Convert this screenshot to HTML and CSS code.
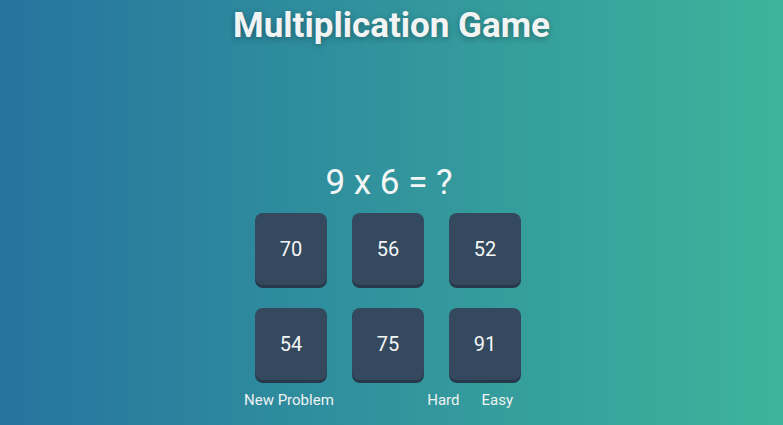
FILE: index.html
```html
<!DOCTYPE html>
<html>
<head>
<meta charset="utf-8">
<link rel="stylesheet" href="styles.css">
</head>
<body>
<div class="page">
  <h1 class="title">Multiplication Game</h1>
  <div class="game">
    <div class="problem">9 x 6 = ?</div>
    <div class="grid">
      <button class="answer">70</button>
      <button class="answer">56</button>
      <button class="answer">52</button>
      <button class="answer">54</button>
      <button class="answer">75</button>
      <button class="answer">91</button>
    </div>
    <div class="controls">
      <span class="link new">New Problem</span>
      <span class="link hard">Hard</span>
      <span class="link easy">Easy</span>
    </div>
  </div>
</div>
</body>
</html>
```

FILE: styles.css
```css
* { box-sizing: border-box; }
html, body {
  margin: 0;
  padding: 0;
  height: 425px;
  overflow: hidden;
}
body {
  background: linear-gradient(to right, #26749f, #3db49b);
  font-family: Roboto, "Noto Sans", sans-serif;
  color: #f4f6f6;
}
.page {
  display: flex;
  flex-direction: column;
  align-items: center;
  height: 425px;
}
.title {
  margin: 6px 0 0 0;
  font-size: 35px;
  font-weight: 700;
  line-height: 40px;
  color: #f2f4f4;
  text-shadow: 0 2px 6px rgba(0, 0, 0, 0.3);
}
.game {
  display: flex;
  flex-direction: column;
  align-items: center;
  margin-top: 116px;
  margin-left: -7px;
}
.problem {
  font-size: 35px;
  font-weight: 400;
  line-height: 42px;
  color: #f4f6f6;
  margin-left: 2px;
}
.grid {
  display: grid;
  grid-template-columns: repeat(3, 72px);
  column-gap: 25px;
  row-gap: 23px;
  margin-top: 9px;
}
.answer {
  width: 72px;
  height: 72px;
  border: none;
  border-radius: 8px;
  background: #34495e;
  box-shadow: 0 3px 0 #26384a;
  color: #f4f6f6;
  font-family: Roboto, "Noto Sans", sans-serif;
  font-size: 20px;
  padding: 0;
}
.controls {
  display: flex;
  width: 290px;
  margin-top: 10px;
  font-size: 15px;
  line-height: 20px;
  color: #eef2f2;
}
.new { margin-left: 1px; }
.hard { margin-left: auto; }
.easy { margin-left: 22px; margin-right: 20px; }
```
